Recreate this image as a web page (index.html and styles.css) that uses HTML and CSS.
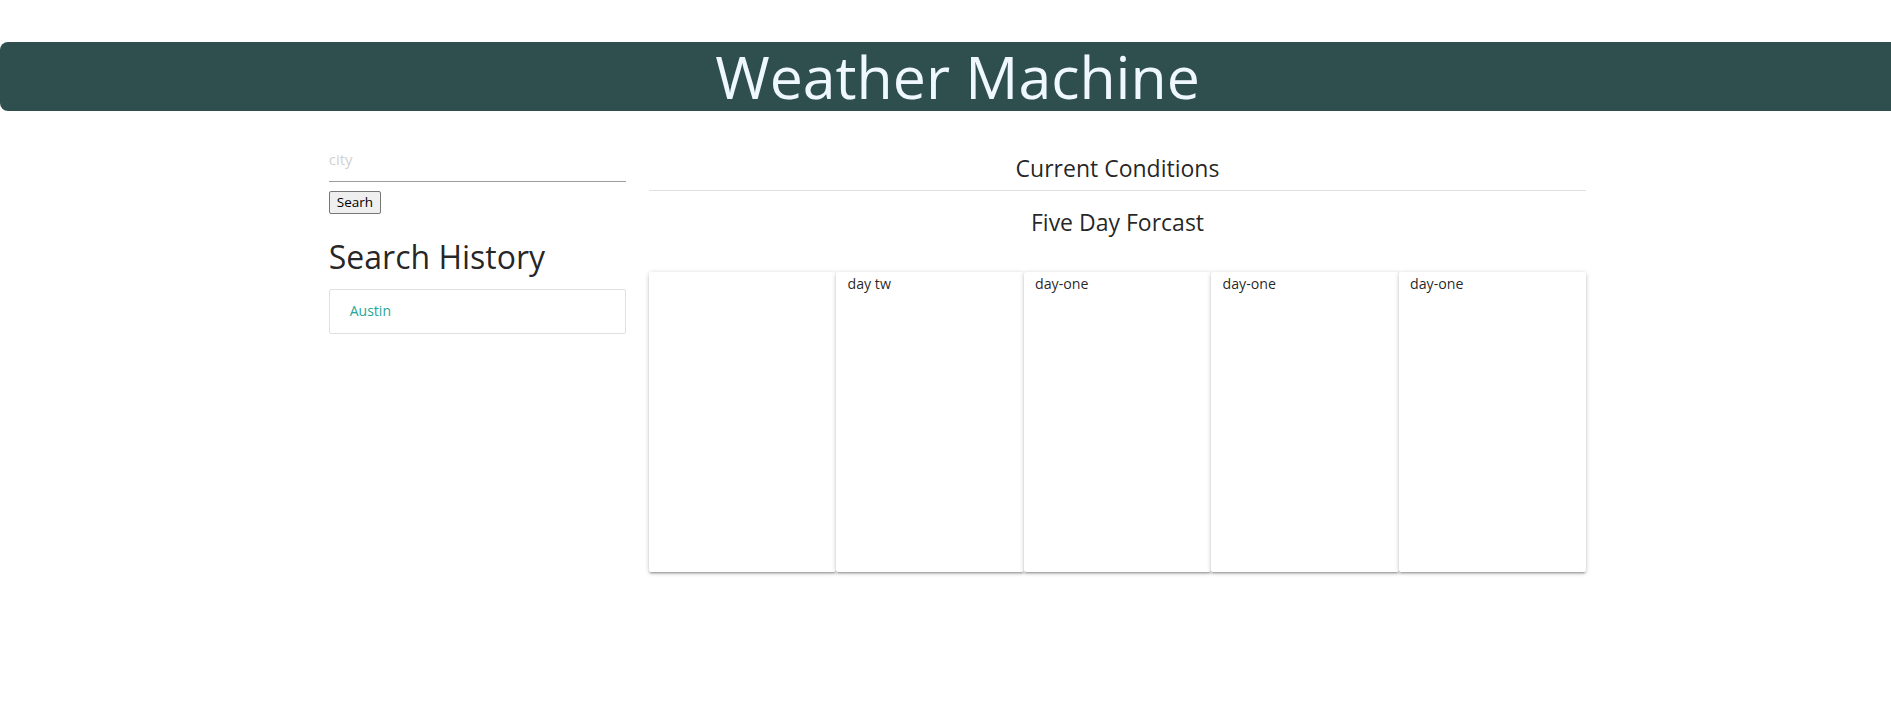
FILE: index.html
```html
<!DOCTYPE html>
<html lang="en">
<head>
<meta charset="utf-8">
<title>Weather Machine</title>
<link rel="stylesheet" href="styles.css">
</head>
<body>
<div class="page">
  <h1 class="site-title">Weather Machine</h1>
  <main class="container">
    <aside class="sidebar">
      <input class="city-input" type="text" placeholder="city">
      <div class="btn-row"><button class="search-btn" type="button">Searh</button></div>
      <h4 class="history-title">Search History</h4>
      <div class="collection">
        <a class="collection-item" href="#">Austin</a>
      </div>
    </aside>
    <section class="content">
      <div class="current">
        <h5 class="section-title">Current Conditions</h5>
      </div>
      <h5 class="section-title forecast-title">Five Day Forcast</h5>
      <div class="forecast">
        <div class="day-card"></div>
        <div class="day-card">day tw</div>
        <div class="day-card">day-one</div>
        <div class="day-card">day-one</div>
        <div class="day-card">day-one</div>
      </div>
    </section>
  </main>
</div>
</body>
</html>
```
FILE: styles.css
```css
html {
  font-size: 15px;
  overflow-x: hidden;
}

body {
  margin: 0;
  font-family: "Open Sans", "Noto Sans", sans-serif;
  color: rgba(0, 0, 0, 0.87);
  line-height: 1.5;
  background: #fff;
}

.page {
  width: 1915px;
  padding-bottom: 40px;
}

.site-title {
  margin: 42px 0 25px;
  height: 69px;
  line-height: 69px;
  background: #2f4f4f;
  color: #f0f8ff;
  text-align: center;
  font-size: 59px;
  font-weight: 400;
  border-radius: 8px;
}

.container {
  width: 1280px;
  margin: 0 auto;
  display: flex;
}

.sidebar {
  width: 320px;
  padding: 0 11.25px;
  box-sizing: border-box;
}

.city-input {
  display: block;
  width: 100%;
  height: 45px;
  margin: 0 0 8px;
  padding: 0;
  border: none;
  border-bottom: 1px solid #9e9e9e;
  outline: none;
  font-family: "Open Sans", sans-serif;
  font-size: 15px;
  color: rgba(0, 0, 0, 0.87);
  background: transparent;
  box-sizing: content-box;
}

.city-input::placeholder {
  color: #d1d1d1;
}

.btn-row {
  height: 23px;
  margin-top: 1px;
}

.search-btn {
  height: 23px;
  padding: 0 7px;
  border: 1px solid #767676;
  border-radius: 2px;
  background: #efefef;
  font-family: "Open Sans", sans-serif;
  font-size: 13.5px;
  color: #000;
  line-height: 19px;
}

.history-title {
  margin: 24.5px 0 14px;
  font-size: 32px;
  font-weight: 400;
  line-height: 37.6px;
}

.collection {
  border: 1px solid #e0e0e0;
  border-radius: 2px;
  margin: 0 0 15px;
}

.collection-item {
  display: block;
  padding: 10px 20px;
  line-height: 22.5px;
  font-size: 14px;
  color: #26a69a;
  text-decoration: none;
}

.content {
  width: 960px;
  padding: 0 11.25px;
  box-sizing: border-box;
}

.current {
  padding: 19px 0 8px;
  border-bottom: 1px solid #e0e0e0;
}

.section-title {
  margin: 0;
  font-size: 23px;
  font-weight: 400;
  line-height: 27px;
  text-align: center;
}

.forecast-title {
  margin-top: 17.5px;
}

.forecast {
  display: flex;
  margin-top: 36px;
  height: 300px;
}

.day-card {
  flex: 1;
  padding: 1px 11.25px 0;
  font-size: 14.2px;
  line-height: 22.5px;
  border-radius: 2px;
  background: #fff;
  box-shadow: 0 2px 2px 0 rgba(0, 0, 0, 0.14), 0 3px 1px -2px rgba(0, 0, 0, 0.12), 0 1px 5px 0 rgba(0, 0, 0, 0.2);
}
```
